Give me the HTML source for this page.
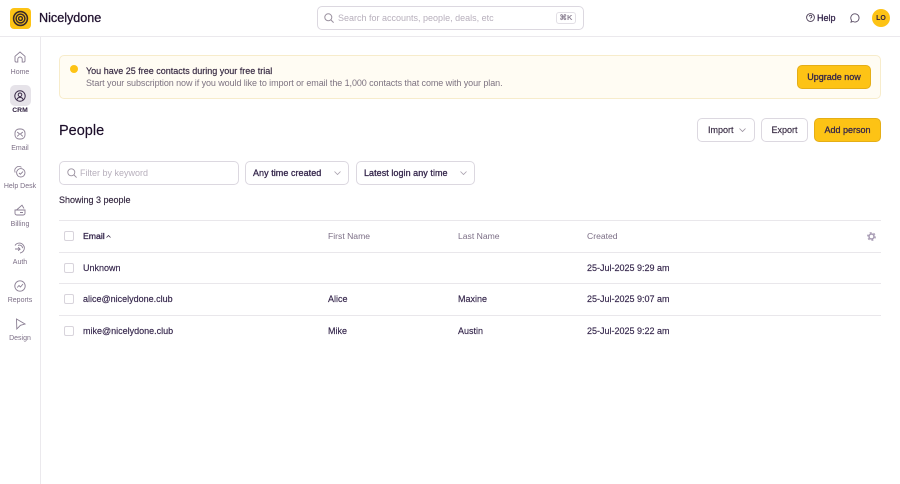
<!DOCTYPE html>
<html><head><meta charset="utf-8"><style>
html,body{margin:0;padding:0;background:#fff}
body{width:900px;height:484px;position:relative;overflow:hidden;font-family:"Liberation Sans",sans-serif;color:#2a1a3a}
.a{position:absolute}
.t{position:absolute;white-space:nowrap;font-size:9px;line-height:12px;color:#33244a;-webkit-text-stroke:.15px currentColor}
.h{position:absolute;white-space:nowrap;font-size:8.6px;line-height:12px;color:#7c6f86}
.s{-webkit-text-stroke:.28px currentColor}
.n{position:absolute;white-space:nowrap;font-size:7px;line-height:10px;color:#7c6f86;width:40px;text-align:center;left:0}
.b{position:absolute;box-sizing:border-box;border:1px solid #dcd8e0;border-radius:5px;background:#fff}
.y{position:absolute;box-sizing:border-box;border:1px solid #e5ae16;border-radius:5px;background:#fdc315}
.c{position:absolute;box-sizing:border-box;width:10px;height:10px;border:1px solid #d8d4dc;border-radius:2px;left:64px;background:#fff}
.l{position:absolute;height:1px;left:59px;width:822px;background:#e9e7eb}
svg{position:absolute;overflow:visible;fill:none}
</style></head><body>
<div class="a" style="left:0;top:36px;width:900px;height:1px;background:#ebe9ed"></div>
<div class="a" style="left:40px;top:36px;width:1px;height:448px;background:#ebe9ed"></div>

<!-- logo -->
<div class="a" style="left:10px;top:8px;width:21px;height:21px;border-radius:4px;background:#fdc315"></div>
<svg style="left:10px;top:8px" width="21" height="21" stroke="#3a2a2a"><circle cx="10.5" cy="10.5" r="6.9" stroke-width="1.6"/><circle cx="10.5" cy="10.5" r="4.4" stroke-width="1.5"/><circle cx="10.5" cy="10.5" r="1.9" stroke-width="1.4"/></svg>
<div class="t s" style="left:39px;top:10px;font-size:12.6px;line-height:16px;color:#21122f">Nicelydone</div>

<!-- search -->
<div class="b" style="left:317px;top:6px;width:267px;height:24px"></div>
<svg style="left:324px;top:13px" width="10" height="10" stroke="#9a919f" stroke-width="1"><circle cx="4.3" cy="4.3" r="3.5"/><path d="M7 7l2.6 2.6"/></svg>
<div class="h" style="left:338px;top:12px;font-size:9px;color:#b7afbc">Search for accounts, people, deals, etc</div>
<div class="a" style="left:556px;top:12px;width:20px;height:12px;box-sizing:border-box;border:1px solid #e2dfe5;border-radius:3px;font-size:7.5px;font-weight:bold;line-height:10px;text-align:center;color:#8d8394">⌘K</div>

<!-- top right -->
<svg style="left:806px;top:13px" width="9" height="9" stroke="#4a3d55" stroke-width=".9"><circle cx="4.5" cy="4.5" r="3.9"/><path d="M3.2 3.5a1.3 1.3 0 1 1 1.7 1.3c-.3.1-.4.4-.4.7M4.5 6.6v.3"/></svg>
<div class="t s" style="left:817px;top:12px">Help</div>
<svg style="left:850px;top:13px" width="10" height="10" stroke="#5a4d65" stroke-width=".9"><path d="M5 .8a4.1 4.1 0 1 1-2 7.7L1 9.2l.5-2A4.1 4.1 0 0 1 5 .8z"/></svg>
<div class="a" style="left:872px;top:9px;width:18px;height:18px;border-radius:50%;background:#fdc315;font-size:7px;font-weight:bold;line-height:19px;text-align:center;color:#2b1c3c">LO</div>

<!-- sidebar -->
<svg style="left:14px;top:51px" width="12" height="12" stroke="#8a7e93" stroke-width=".9"><path d="M1 5.3L6 1l5 4.3v4.5a1.3 1.3 0 0 1-1.3 1.3H8.200V8.200a2.200 2.200 0 0 0-4.400 0v2.900H2.300A1.300 1.300 0 0 1 1 9.800z"/></svg>
<div class="n" style="top:68px">Home</div>
<div class="a" style="left:10px;top:85px;width:21px;height:21px;border-radius:5px;background:#e6e3e9"></div>
<svg style="left:14px;top:90px" width="12" height="12" stroke="#3a2b48" stroke-width="1"><circle cx="6" cy="6" r="5.200"/><circle cx="6" cy="4.800" r="1.800"/><path d="M2.800 9.800c.6-1.600 1.800-2.400 3.200-2.400s2.600.8 3.200 2.400"/></svg>
<div class="n" style="top:106px;font-weight:bold;color:#2b1c3c;font-size:6.8px">CRM</div>
<svg style="left:14px;top:128px" width="12" height="12" stroke="#8a7e93" stroke-width=".9"><rect x="1" y="1" width="10" height="10" rx="4"/><path d="M3.200 4l2.800 2.400L8.800 4M3.200 8.400L5 6.600M8.800 8.400L7 6.600"/></svg>
<div class="n" style="top:144px">Email</div>
<svg style="left:14px;top:166px" width="12" height="12" stroke="#8a7e93" stroke-width=".9"><path d="M1.200 6.500A4.200 4.200 0 0 1 7.500 1.300"/><circle cx="6.800" cy="6.800" r="4.200"/><path d="M5 7l1.400 1.200L9 5.600"/></svg>
<div class="n" style="top:182px">Help Desk</div>
<svg style="left:14px;top:204px" width="12" height="12" stroke="#8a7e93" stroke-width=".9"><path d="M1 6h10v3.200a1.800 1.800 0 0 1-1.800 1.800H2.800A1.800 1.800 0 0 1 1 9.200zM2.500 6L8 1.200 10 4.500M6 8.500h3"/></svg>
<div class="n" style="top:220px">Billing</div>
<svg style="left:14px;top:242px" width="12" height="12" stroke="#8a7e93" stroke-width=".9"><path d="M1 3.500A5 5 0 1 1 6 11M1 7h5L4.200 5.200M6 7L4.200 8.800M4 3.500a3 3 0 0 1 4.500 2.600"/></svg>
<div class="n" style="top:258px">Auth</div>
<svg style="left:14px;top:280px" width="12" height="12" stroke="#8a7e93" stroke-width=".9"><circle cx="6" cy="6" r="5.200"/><path d="M3.200 7.500L5 5.500l1.500 1.500L9 4"/></svg>
<div class="n" style="top:296px">Reports</div>
<svg style="left:14px;top:318px" width="12" height="12" stroke="#8a7e93" stroke-width=".9"><path d="M2.500 1L11 6 6.500 7.300 2.800 11z"/></svg>
<div class="n" style="top:334px">Design</div>

<!-- banner -->
<div class="a" style="left:59px;top:55px;width:822px;height:44px;box-sizing:border-box;border:1px solid #f7eccb;border-radius:5px;background:#fffcf3"></div>
<div class="a" style="left:70px;top:65px;width:8px;height:8px;border-radius:50%;background:#fdc315"></div>
<div class="t" style="left:86px;top:65px;color:#33263f">You have 25 free contacts during your free trial</div>
<div class="h" style="left:86px;top:77px;font-size:9px;letter-spacing:-.08px;color:#7d7381">Start your subscription now if you would like to import or email the 1,000 contacts that come with your plan.</div>
<div class="y" style="left:797px;top:65px;width:74px;height:24px"></div>
<div class="t s" style="left:797px;top:71px;width:74px;text-align:center">Upgrade now</div>

<!-- heading -->
<div class="t" style="left:59px;top:121px;font-size:14.5px;line-height:20px;color:#1d0f2b">People</div>
<div class="b" style="left:697px;top:118px;width:58px;height:24px"></div>
<div class="t" style="left:708px;top:124px;color:#33263f">Import</div>
<svg style="left:739px;top:128px" width="7" height="4" stroke="#9a919f" stroke-width=".8"><path d="M.5.500L3.500 3.500 6.500.500"/></svg>
<div class="b" style="left:761px;top:118px;width:47px;height:24px"></div>
<div class="t" style="left:761px;top:124px;width:47px;text-align:center;color:#33263f">Export</div>
<div class="y" style="left:814px;top:118px;width:67px;height:24px"></div>
<div class="t s" style="left:814px;top:124px;width:67px;text-align:center">Add person</div>

<!-- filters -->
<div class="b" style="left:59px;top:161px;width:180px;height:24px"></div>
<svg style="left:67px;top:168px" width="10" height="10" stroke="#9a919f" stroke-width=".9"><circle cx="4.300" cy="4.300" r="3.500"/><path d="M7 7l2.600 2.600"/></svg>
<div class="h" style="left:80px;top:167px;font-size:9px;color:#b7afbc">Filter by keyword</div>
<div class="b" style="left:245px;top:161px;width:104px;height:24px"></div>
<div class="t s" style="left:253px;top:167px;letter-spacing:.05px">Any time created</div>
<svg style="left:334px;top:171px" width="7" height="4" stroke="#a9a1ae" stroke-width=".8"><path d="M.5.500L3.500 3.500 6.500.500"/></svg>
<div class="b" style="left:356px;top:161px;width:119px;height:24px"></div>
<div class="t s" style="left:364px;top:167px;letter-spacing:.05px">Latest login any time</div>
<svg style="left:460px;top:171px" width="7" height="4" stroke="#a9a1ae" stroke-width=".8"><path d="M.5.500L3.500 3.500 6.500.500"/></svg>
<div class="t" style="left:59px;top:194px;color:#33263f">Showing 3 people</div>

<!-- table -->
<div class="l" style="top:220px"></div>
<div class="c" style="top:231px"></div>
<div class="t s" style="left:83px;top:230px;font-size:8.7px">Email</div>
<svg style="left:106px;top:235px" width="5" height="3" stroke="#2b1c3c" stroke-width=".7"><path d="M.5 2.500L2.500.5 4.500 2.500"/></svg>
<div class="h" style="left:328px;top:230px">First Name</div>
<div class="h" style="left:458px;top:230px">Last Name</div>
<div class="h" style="left:587px;top:230px">Created</div>
<svg style="left:867px;top:232px" width="9" height="9" stroke="#a79bb3"><circle cx="4.500" cy="4.500" r="2.500" stroke-width="1.500"/><circle cx="4.500" cy="4.500" r="3.800" stroke-width="1.200" stroke-dasharray="2 1.980"/></svg>
<div class="l" style="top:252px"></div>
<div class="c" style="top:263px"></div>
<div class="t" style="left:83px;top:262px">Unknown</div>
<div class="t" style="left:587px;top:262px">25-Jul-2025 9:29 am</div>
<div class="l" style="top:283px"></div>
<div class="c" style="top:294px"></div>
<div class="t" style="left:83px;top:293px">alice@nicelydone.club</div>
<div class="t" style="left:328px;top:293px">Alice</div>
<div class="t" style="left:458px;top:293px">Maxine</div>
<div class="t" style="left:587px;top:293px">25-Jul-2025 9:07 am</div>
<div class="l" style="top:315px"></div>
<div class="c" style="top:326px"></div>
<div class="t" style="left:83px;top:325px">mike@nicelydone.club</div>
<div class="t" style="left:328px;top:325px">Mike</div>
<div class="t" style="left:458px;top:325px">Austin</div>
<div class="t" style="left:587px;top:325px">25-Jul-2025 9:22 am</div>
</body></html>
